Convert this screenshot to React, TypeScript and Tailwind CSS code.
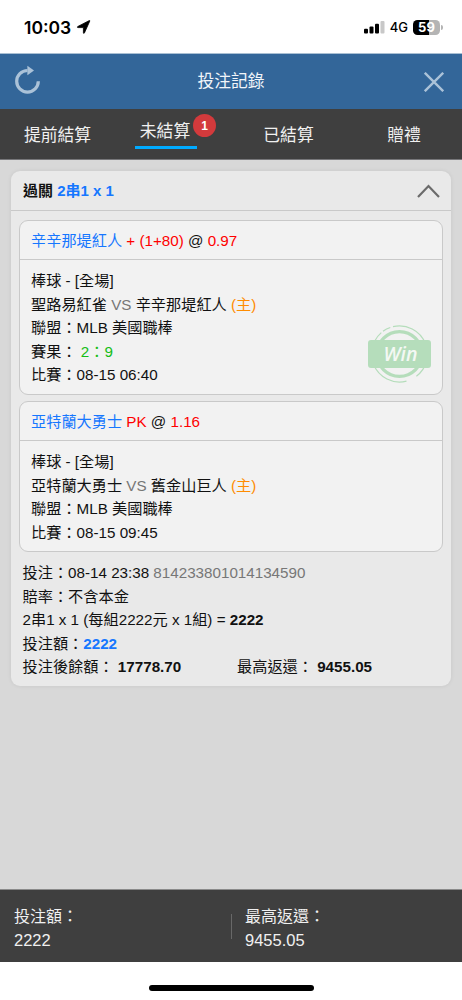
import type { ReactNode } from 'react'

const StatusBar = () => {
    return (
        <div className="flex h-[54px] items-center justify-between border-b border-[#a9bfd3] bg-white pr-[19px] pl-[24px] text-black">
            <div className="flex items-center gap-[5px] pt-[2px]">
                <span className="font-[Inter] text-[17.5px] leading-none font-semibold">10:03</span>
                <svg width="15" height="15" viewBox="0 0 15 15">
                    <path
                        d="M13.8 1 8.4 13c-.3.6-1 .4-1-.2V7.6H2c-.7 0-.8-.8-.2-1.1L13 .7c.5-.2 1-.2.8.3Z"
                        stroke="currentColor"
                        strokeWidth=".8"
                    />
                </svg>
            </div>
            <div className="flex items-center pt-[2px]">
                <svg width="21" height="13" viewBox="0 0 21 13">
                    <rect x="0" y="7.8" width="4" height="4.8" rx="1" />
                    <rect x="5.5" y="5.6" width="4" height="7" rx="1" />
                    <rect x="11" y="2.8" width="4" height="9.8" rx="1" />
                    <rect x="16.5" y="0" width="4" height="12.6" rx="1" fill="#c8c8c8" />
                </svg>
                <span className="ml-[5px] font-[Inter] text-[13px] leading-none font-medium">4G</span>
                <div className="ml-[5px] flex h-[15px] w-[27px] items-center justify-center rounded-[4.5px] bg-linear-to-r from-black from-60% to-[#b4b4b4] to-60% font-[Inter] text-[13px] leading-none font-bold text-white">
                    59
                </div>
                <div className="ml-px h-[5px] w-[2px] rounded-r-full bg-[#b4b4b4]" />
            </div>
        </div>
    )
}

const Header = () => {
    return (
        <header className="flex h-[55px] items-center justify-between bg-[#336699] pr-[18px] pl-[15px] text-[#abc2d8]">
            <svg className="mb-[4px]" width="26" height="30" viewBox="0 0 26 30" fill="none">
                <path d="M23.3 16.3A10.8 10.8 0 1 1 12.5 5.5" stroke="currentColor" strokeWidth="3.2" />
                <path d="M12.4 .8 19 5.5 12.4 10.2Z" fill="currentColor" />
            </svg>
            <h1 className="pt-[2px] pr-[3px] text-[16.8px] leading-none text-[#f1f5f9]">投注記錄</h1>
            <svg width="20" height="20" viewBox="0 0 20 20" stroke="currentColor" strokeWidth="2.4">
                <path d="M.8.8 19.2 19.2M19.2.8.8 19.2" />
            </svg>
        </header>
    )
}

const Tabs = () => {
    return (
        <nav className="flex h-[51px] items-center border-b border-[#77777a] bg-[#3f3f3f] text-[16.8px] leading-none text-[#f0f0f0]">
            <div className="w-[115px] pt-[4px] text-center">提前結算</div>
            <div className="relative flex h-full w-[101px] justify-center pr-px pl-[1px]">
                <div className="mt-[13px] h-[27px] w-[62px] border-b-[3px] border-[#00aaff] text-center">
                    <span className="block pt-[2px] pr-px">未結算</span>
                </div>
                <span className="absolute top-[5px] right-0 flex size-[23px] items-center justify-center rounded-full bg-[#d33a3c] text-[12px] font-bold text-white">
                    1
                </span>
            </div>
            <div className="w-[145px] pt-[4px] text-center">已結算</div>
            <div className="w-[86px] pt-[4px] text-center">贈禮</div>
        </nav>
    )
}

const WinStamp = () => {
    return (
        <svg className="absolute top-[103px] right-[10px]" width="65" height="60" viewBox="0 0 65 60" fill="none">
            <circle cx="32.5" cy="30" r="22.4" stroke="#b5ddbb" strokeWidth="3.4" />
            <path
                d="M26 2.6a28 28 0 0 1 32.3 16.7M16 7.2a28 28 0 0 1 7.3-3.7M7.6 17.3a28 28 0 0 1 6.7-8.7M59.6 37a28 28 0 0 1-10.2 15.2M39.5 57.1A28 28 0 0 1 6.6 40.6"
                stroke="#b5ddbb"
                strokeWidth="1.2"
            />
            <rect x="1" y="16" width="63" height="28" rx="3" fill="#b5ddbb" />
            <text
                x="33.5"
                y="37"
                textAnchor="middle"
                fill="#f4f8f4"
                fontFamily="Open Sans, sans-serif"
                fontSize="19.5"
                fontStyle="italic"
                fontWeight="600"
            >
                Win
            </text>
        </svg>
    )
}

interface BetProps {
    team: string
    handicap: string
    odds: string
    away: string
    home: string
    score?: string
    time: string
    children?: ReactNode
}

const Bet = ({ team, handicap, odds, away, home, score, time, children }: BetProps) => {
    return (
        <section className="relative rounded-[9px] border border-[#c9c9c9] bg-[#f2f2f2]">
            <h3 className="h-[39px] border-b border-[#c9c9c9] pl-[11px] leading-[39px]">
                <span className="text-[#1677ff]">{team}</span> <span className="text-[#ff0000]">{handicap}</span> @{' '}
                <span className="text-[#ff0000]">{odds}</span>
            </h3>
            <div className="pt-[9px] pb-[7px] pl-[11px]">
                <p>棒球 - [全場]</p>
                <p>
                    {away} <span className="text-[#777]">VS</span> {home} <span className="text-[#ff8c00]">(主)</span>
                </p>
                <p>聯盟：MLB 美國職棒</p>
                {score && (
                    <p>
                        賽果： <span className="text-[#16bd16]">{score}</span>
                    </p>
                )}
                <p>比賽：{time}</p>
            </div>
            {children}
        </section>
    )
}

const Ticket = () => {
    return (
        <article className="h-[515px] rounded-[9px] bg-[#e9e9e9] text-[15.2px] leading-[23.5px] text-[#111] shadow-[0_0_4px_rgba(0,0,0,0.08)]">
            <div className="flex h-[40px] items-center justify-between border-b border-[#c9c9c9] pr-[11px] pl-[12px] font-bold">
                <h2 className="text-[15px]">
                    過關 <span className="text-[#1677ff]">2串1 x 1</span>
                </h2>
                <svg width="23" height="14" viewBox="0 0 23 14" fill="none" stroke="#6b6b6b" strokeWidth="2.2">
                    <path d="M1 13 11.5 2 22 13" />
                </svg>
            </div>
            <div className="flex flex-col gap-[6.5px] px-[8px] pt-[9px]">
                <Bet
                    team="辛辛那堤紅人"
                    handicap="+ (1+80)"
                    odds="0.97"
                    away="聖路易紅雀"
                    home="辛辛那堤紅人"
                    score="2：9"
                    time="08-15 06:40"
                >
                    <WinStamp />
                </Bet>
                <Bet
                    team="亞特蘭大勇士"
                    handicap="PK"
                    odds="1.16"
                    away="亞特蘭大勇士"
                    home="舊金山巨人"
                    time="08-15 09:45"
                />
            </div>
            <div className="pt-[9px] pl-[11.5px]">
                <p>
                    投注：08-14 23:38 <span className="text-[#777]">814233801014134590</span>
                </p>
                <p>賠率：不含本金</p>
                <p>
                    2串1 x 1 (每組2222元 x 1組) = <b>2222</b>
                </p>
                <p>
                    投注額：<b className="text-[#1677ff]">2222</b>
                </p>
                <div className="flex">
                    <p className="w-[214.5px]">
                        投注後餘額： <b>17778.70</b>
                    </p>
                    <p>
                        最高返還： <b>9455.05</b>
                    </p>
                </div>
            </div>
        </article>
    )
}

const Footer = () => {
    return (
        <footer className="flex h-[73px] items-center border-t border-[#8a8a8a] bg-[#3f3f3f] text-[16.5px] leading-[23.5px] text-[#f0f0f0]">
            <div className="w-[231px] pt-[5px] pl-[14px]">
                <p className="text-[16px]">投注額：</p>
                <p>2222</p>
            </div>
            <div className="h-[25px] w-px bg-[#686868]" />
            <div className="pt-[5px] pl-[13px]">
                <p className="text-[16px]">最高返還：</p>
                <p>9455.05</p>
            </div>
        </footer>
    )
}

export default function App() {
    return (
        <div className="flex h-[1000px] w-[462px] flex-col overflow-hidden bg-[#d8d8d8] font-['Liberation_Sans','Noto_Sans_CJK_TC',sans-serif]">
            <StatusBar />
            <Header />
            <Tabs />
            <main className="flex-1 px-[11px] pt-[11px]">
                <Ticket />
            </main>
            <Footer />
            <div className="flex h-[38px] justify-center bg-white pt-[23px]">
                <div className="h-[6px] w-[165px] rounded-full bg-black" />
            </div>
        </div>
    )
}
